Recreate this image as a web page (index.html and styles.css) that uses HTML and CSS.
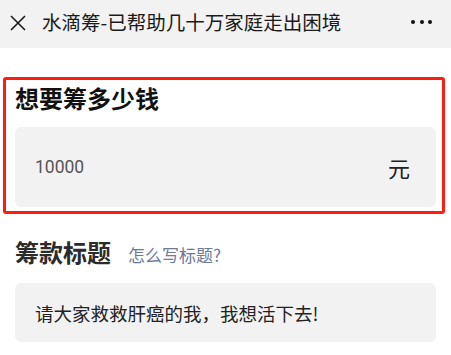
FILE: index.html
```html
<!DOCTYPE html>
<html lang="zh">
<head>
<meta charset="utf-8">
<link rel="stylesheet" href="styles.css">
</head>
<body>
<div class="topbar">
  <svg class="close" width="16" height="16" viewBox="0 0 16 16"><path d="M1 1L15 15M15 1L1 15" stroke="#1a1a1a" stroke-width="1.6" fill="none"/></svg>
  <div class="title">水滴筹-已帮助几十万家庭走出困境</div>
  <div class="more"><span></span><span></span><span></span></div>
</div>
<div class="content">
  <div class="amount-box">
    <div class="heading">想要筹多少钱</div>
    <div class="field">
      <span class="value">10000</span>
      <span class="unit">元</span>
    </div>
  </div>
  <div class="section">
    <div class="section-head">
      <span class="heading">筹款标题</span>
      <span class="hint">怎么写标题?</span>
    </div>
    <div class="field text-field">请大家救救肝癌的我，我想活下去!</div>
  </div>
</div>
</body>
</html>
```

FILE: styles.css
```css
html, body { margin: 0; padding: 0; background: #fff; }
body {
  font-family: "Noto Sans CJK SC", "Noto Sans", sans-serif;
  color: #1a1a1a;
  width: 451px;
  height: 355px;
  overflow: hidden;
}
.topbar {
  height: 48px;
  background: #f2f2f2;
  display: flex;
  align-items: center;
  padding: 0 10px;
  box-sizing: border-box;
}
.close { flex: none; margin-top: -2px; }
.title {
  margin-left: 16px;
  font-size: 19.5px;
  color: #1a1a1a;
  flex: 1;
  line-height: 24px;
  margin-top: -4px;
}
.more { display: flex; gap: 4.5px; margin-right: 9px; margin-top: -4px; }
.more span { width: 4px; height: 4px; border-radius: 50%; background: #111; }
.content { padding: 29px 6px 0 3px; }
.amount-box {
  border: 3px solid #fb1d12;
  border-radius: 3px;
  padding: 0 6px 5px 9px;
  height: 137px;
  box-sizing: border-box;
}
.heading {
  font-size: 24px;
  font-weight: 700;
  line-height: 36px;
  color: #111;
}
.field {
  background: #f2f2f2;
  border-radius: 6px;
  margin-top: 11px;
  height: 80px;
  display: flex;
  align-items: center;
  justify-content: space-between;
  padding: 0 26px 0 20px;
}
.value { font-family: "Roboto", "Noto Sans", sans-serif; font-size: 17.5px; color: #555; }
.unit { font-size: 22px; color: #222; }
.section { padding: 20px 9px 0 12px; }
.section-head { display: flex; align-items: baseline; gap: 17px; }
.section-head .heading { color: #2b2b2b; }
.hint { font-size: 17px; color: #6b7a99; }
.text-field {
  margin-top: 13px;
  height: 59px;
  padding: 0 20px;
  justify-content: flex-start;
  font-size: 18.5px;
  color: #222;
}
```
